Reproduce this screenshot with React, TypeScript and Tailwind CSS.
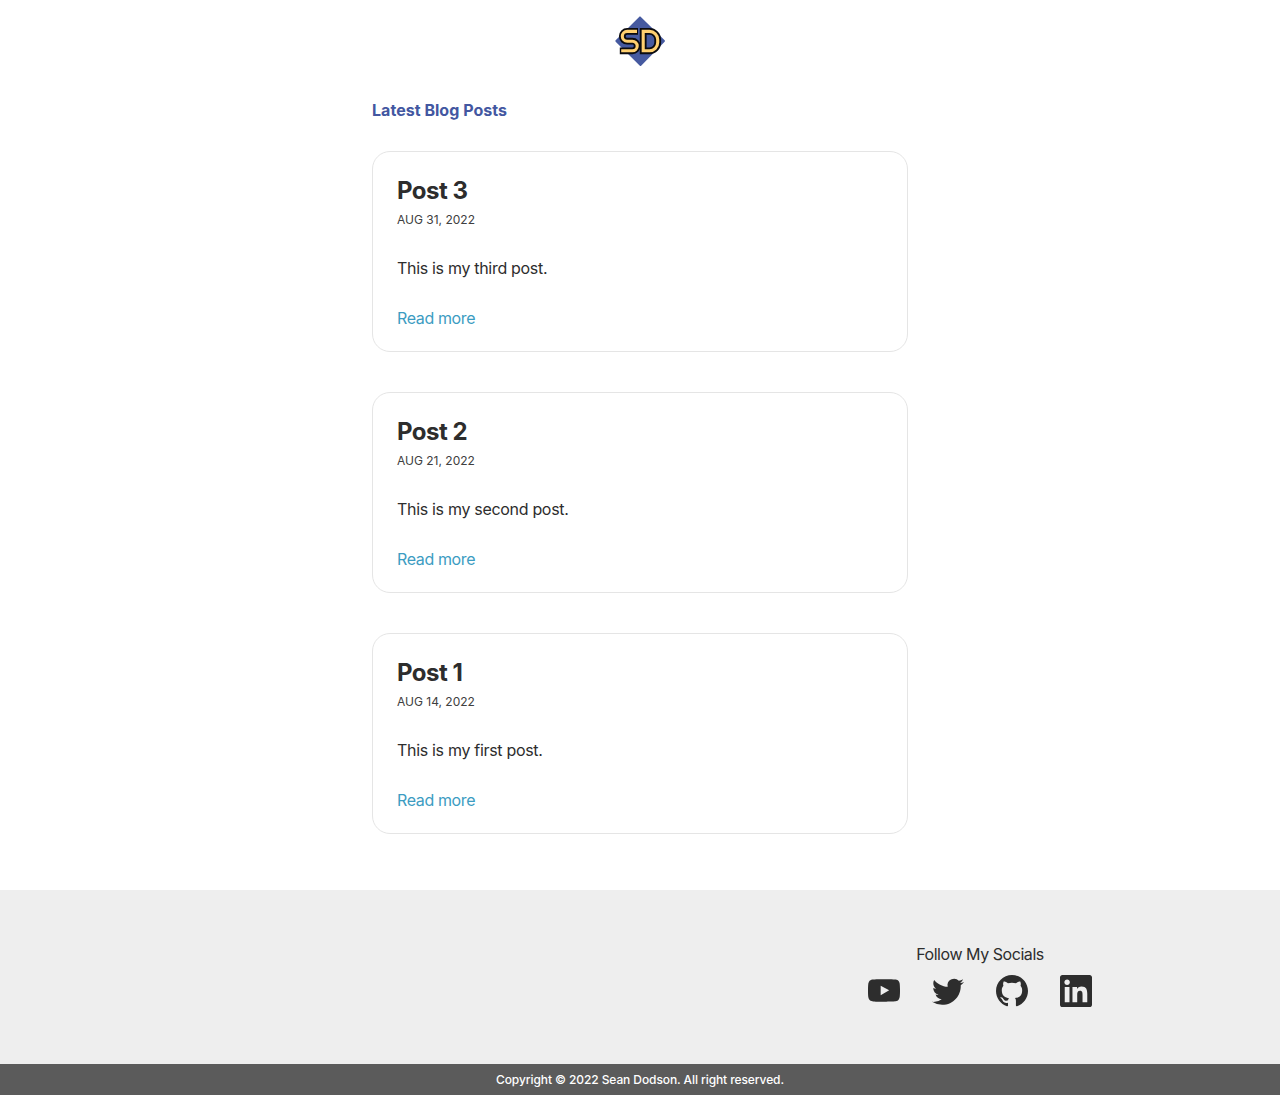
const posts = [
  { title: 'Post 3', date: 'Aug 31, 2022', body: 'This is my third post.' },
  { title: 'Post 2', date: 'Aug 21, 2022', body: 'This is my second post.' },
  { title: 'Post 1', date: 'Aug 14, 2022', body: 'This is my first post.' },
];

const socials = [
  {
    name: 'YouTube',
    viewBox: '0 0.4 24 24',
    path: 'M23.8 7.2s-.2-1.7-1-2.4c-.9-1-1.9-1-2.4-1C17 3.6 12 3.6 12 3.6s-5 0-8.4.2c-.5.1-1.5.1-2.4 1-.7.7-1 2.4-1 2.4S0 9.1 0 11.1v1.8c0 1.9.2 3.9.2 3.9s.2 1.7 1 2.4c.9 1 2.1.9 2.6 1 1.9.2 8.2.2 8.2.2s5 0 8.4-.3c.5-.1 1.5-.1 2.4-1 .7-.7 1-2.4 1-2.4s.2-1.9.2-3.9V11c0-1.9-.2-3.8-.2-3.8zM9.5 15.5V8.4l6.4 3.5z',
  },
  {
    name: 'Twitter',
    viewBox: '0 -0.6 24 24',
    path: 'M23.953 4.57a10 10 0 01-2.825.775 4.958 4.958 0 002.163-2.723c-.951.555-2.005.959-3.127 1.184a4.92 4.92 0 00-8.384 4.482C7.69 8.095 4.067 6.13 1.64 3.162a4.822 4.822 0 00-.666 2.475c0 1.71.87 3.213 2.188 4.096a4.904 4.904 0 01-2.228-.616v.06a4.923 4.923 0 003.946 4.827 4.996 4.996 0 01-2.212.085 4.936 4.936 0 004.604 3.417 9.867 9.867 0 01-6.102 2.105c-.39 0-.779-.023-1.17-.067a13.995 13.995 0 007.557 2.209c9.053 0 13.998-7.496 13.998-13.985 0-.21 0-.42-.015-.63A9.935 9.935 0 0024 4.59z',
  },
  {
    name: 'GitHub',
    viewBox: '0 0.297 24 24',
    path: 'M12 .297c-6.63 0-12 5.373-12 12 0 5.303 3.438 9.8 8.205 11.385.6.113.82-.258.82-.577 0-.285-.01-1.04-.015-2.04-3.338.724-4.042-1.61-4.042-1.61C4.422 18.07 3.633 17.7 3.633 17.7c-1.087-.744.084-.729.084-.729 1.205.084 1.838 1.236 1.838 1.236 1.07 1.835 2.809 1.305 3.495.998.108-.776.417-1.305.76-1.605-2.665-.3-5.466-1.332-5.466-5.93 0-1.31.465-2.38 1.235-3.22-.135-.303-.54-1.523.105-3.176 0 0 1.005-.322 3.3 1.23.96-.267 1.98-.399 3-.405 1.02.006 2.04.138 3 .405 2.28-1.552 3.285-1.23 3.285-1.23.645 1.653.24 2.873.12 3.176.765.84 1.23 1.91 1.23 3.22 0 4.61-2.805 5.625-5.475 5.92.42.36.81 1.096.81 2.22 0 1.606-.015 2.896-.015 3.286 0 .315.21.69.825.57C20.565 22.092 24 17.592 24 12.297c0-6.627-5.373-12-12-12',
  },
  {
    name: 'LinkedIn',
    viewBox: '0 0 24 24',
    path: 'M20.447 20.452h-3.554v-5.569c0-1.328-.027-3.037-1.852-3.037-1.853 0-2.136 1.445-2.136 2.939v5.667H9.351V9h3.414v1.561h.046c.477-.9 1.637-1.85 3.37-1.85 3.601 0 4.267 2.37 4.267 5.455v6.286zM5.337 7.433c-1.144 0-2.063-.926-2.063-2.065 0-1.138.92-2.063 2.063-2.063 1.14 0 2.064.925 2.064 2.063 0 1.139-.925 2.065-2.064 2.065zm1.782 13.019H3.555V9h3.564v11.452zM22.225 0H1.771C.792 0 0 .774 0 1.729v20.542C0 23.227.792 24 1.771 24h20.451C23.2 24 24 23.227 24 22.271V1.729C24 .774 23.2 0 22.222 0h.003z',
  },
];

function Logo() {
  const d = 'M28.2 15.4V34.8H34.5a8.2 8.2 0 0 0 8.2-8.2v-3a8.2 8.2 0 0 0-8.2-8.2Z';
  return (
    <svg viewBox="0 0 50 50" className="size-[50px]" fill="none" aria-label="SD">
      <path d="M25 1.3 49 25 25.5 49 1.3 25Z" fill="#465aa0" stroke="#465aa0" strokeWidth="1.8" strokeLinejoin="round" />
      <g stroke="#0b0b0f" strokeWidth="6.8">
        <path d="M23 15.4H12.2a4.9 4.9 0 0 0 0 9.8h5.2a4.8 4.8 0 0 1 0 9.6H4.8" />
        <path d={d} />
      </g>
      <g stroke="#ffd070" strokeWidth="3.1">
        <path d="M22 15.4H12.2a4.9 4.9 0 0 0 0 9.8h5.2a4.8 4.8 0 0 1 0 9.6H6.2" />
        <path d={d} />
      </g>
    </svg>
  );
}

export default function App() {
  return (
    <div className="flex min-h-[1095px] flex-col bg-white font-['Inter',sans-serif] text-base text-[#2d2d2d]">
      <header className="flex justify-center py-4">
        <Logo />
      </header>
      <main className="mx-auto w-[536px] grow pt-4">
        <h1 className="font-bold leading-6 tracking-[0.03px] text-[#4357a1]">Latest Blog Posts</h1>
        <div className="mt-[29px] flex flex-col gap-10">
          {posts.map((post) => (
            <article key={post.title} className="h-[201px] rounded-[18px] border border-[#e5e5e5] px-6 pt-[23px]">
              <h2 className="text-2xl font-bold leading-8 tracking-[-0.5px]">{post.title}</h2>
              <p className="mt-[5px] text-xs leading-4 uppercase text-[#404040]">{post.date}</p>
              <p className="mt-7 leading-6 tracking-[-0.31px]">{post.body}</p>
              <a href="#" className="mt-[26px] block w-fit leading-6 tracking-[-0.38px] text-[#3c9cc2]">Read more</a>
            </article>
          ))}
        </div>
      </main>
      <footer>
        <div className="flex h-[174px] justify-end bg-[#eeeeee] pr-[188px] pt-[52px]">
          <div className="flex w-56 flex-col items-center">
            <p className="leading-6 tracking-[-0.45px]">Follow My Socials</p>
            <div className="mt-[9px] flex w-full justify-between">
              {socials.map((s) => (
                <a key={s.name} href="#" aria-label={s.name}>
                  <svg viewBox={s.viewBox} className="size-8 fill-[#2d2d2d]">
                    <path d={s.path} />
                  </svg>
                </a>
              ))}
            </div>
          </div>
        </div>
        <p className="h-[31px] bg-[#5b5b5b] text-center text-xs font-medium leading-[31px] tracking-[-0.09px] text-white">
          Copyright © 2022 Sean Dodson. All right reserved.
        </p>
      </footer>
    </div>
  );
}
